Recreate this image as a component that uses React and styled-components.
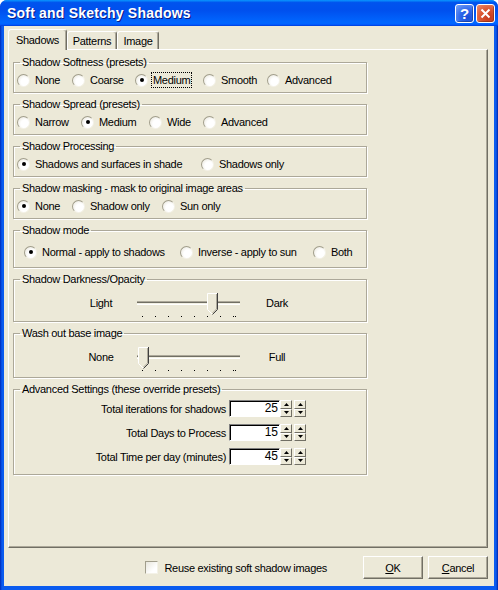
import React from 'react';
import styled, { createGlobalStyle } from 'styled-components';

const GlobalStyle = createGlobalStyle`
  html, body {
    margin: 0;
    padding: 0;
    background: #ffffff;
  }
  body {
    font-family: "Liberation Sans", Arial, sans-serif;
    font-size: 11px;
    letter-spacing: -0.3px;
    color: #000000;
  }
`;

const Window = styled.div`
  width: 498px;
  height: 590px;
  display: flex;
  flex-direction: column;
  border-radius: 7px 7px 0 0;
  overflow: hidden;
  background: linear-gradient(to right, #0029b8 0, #0a5bef 2px, #0a5bef calc(100% - 2px), #0023a8 100%);
`;

const TitleBar = styled.div`
  height: 26px;
  flex: none;
  display: flex;
  align-items: center;
  padding: 0 3px 0 7px;
  background: linear-gradient(
    to bottom,
    #0997ff 0%,
    #0053ee 10%,
    #0050ee 40%,
    #0066ff 85%,
    #0066ff 90%,
    #005bff 94%,
    #003dd7 100%
  );
`;

const Title = styled.div`
  color: #ffffff;
  font-weight: bold;
  font-size: 14px;
  letter-spacing: 0.2px;
  text-shadow: 1px 1px 0 #0a1883;
`;

const TitleButtons = styled.div`
  margin-left: auto;
  display: flex;
  gap: 2px;
`;

const CaptionButton = styled.div`
  width: 19px;
  height: 19px;
  box-sizing: border-box;
  border: 1px solid #ffffff;
  border-radius: 3px;
  display: flex;
  align-items: center;
  justify-content: center;
  color: #ffffff;
  font-weight: bold;
  font-size: 15px;
  letter-spacing: 0;
  background: ${p => p.$close
    ? 'radial-gradient(circle at 70% 75%, #c4391d 0%, #d9532f 45%, #ef8d6c 100%)'
    : 'radial-gradient(circle at 70% 75%, #1a4fd8 0%, #2e67ea 45%, #7aa5f8 100%)'};
  box-shadow: inset -1px -1px 0 rgba(0, 0, 0, 0.25);
`;

const Client = styled.div`
  flex: 1;
  margin: 0 4px 4px 4px;
  background: #ece9d8;
  padding-top: 3px;
  display: flex;
  flex-direction: column;
`;

const TabStrip = styled.div`
  height: 20px;
  display: flex;
  align-items: flex-end;
  padding-left: 4px;
`;

const Tab = styled.div`
  width: ${p => p.$w}px;
  height: ${p => (p.$active ? 21 : 18)}px;
  box-sizing: border-box;
  margin-bottom: ${p => (p.$active ? -1 : 0)}px;
  position: relative;
  z-index: ${p => (p.$active ? 1 : 0)};
  display: flex;
  align-items: center;
  justify-content: center;
  padding-top: ${p => (p.$active ? 0 : 1)}px;
  background: #ece9d8;
  border-top: 1px solid #ffffff;
  border-left: 1px solid #ffffff;
  border-right: 1px solid #716f64;
  border-radius: 3px 3px 0 0;
  box-shadow: inset -1px 0 0 #aca899;
`;

const Panel = styled.div`
  height: 499px;
  box-sizing: border-box;
  margin: 0 6px 0 4px;
  border: 1px solid;
  border-color: #ffffff #716f64 #716f64 #ffffff;
  box-shadow: inset -1px -1px 0 #aca899;
  padding: 6px 0 0 4px;
  display: flex;
  flex-direction: column;
  gap: 5px;
`;

const Group = styled.fieldset`
  width: 354px;
  box-sizing: border-box;
  min-width: 0;
  margin: 0;
  padding: ${p => p.$pad || '4px 0 5px 0'};
  border: 1px solid #aca899;
  box-shadow: inset 1px 1px 0 #ffffff, 1px 1px 0 #ffffff;
`;

const Legend = styled.legend`
  margin-left: 6px;
  padding: 0 2px;
  line-height: 13px;
  height: 13px;
`;

const RadioRow = styled.div`
  height: 14px;
  display: flex;
  align-items: center;
  padding-left: ${p => p.$indent || 3}px;
`;

const Option = styled.label`
  flex: none;
  width: ${p => (p.$w ? `${p.$w}px` : 'auto')};
  display: flex;
  align-items: center;
  gap: 5px;
  white-space: nowrap;
`;

const RadioDot = styled.span`
  flex: none;
  width: 13px;
  height: 13px;
  box-sizing: border-box;
  border-radius: 50%;
  border: 1px solid;
  border-color: #a19e8c #f4f2e8 #f4f2e8 #a19e8c;
  background: radial-gradient(circle at 62% 62%, #ffffff 40%, #e4e1d4 100%);
  display: flex;
  align-items: center;
  justify-content: center;

  &::after {
    content: '';
    width: 4px;
    height: 4px;
    border-radius: 50%;
    background: ${p => (p.$on ? '#000000' : 'transparent')};
  }
`;

const OptionText = styled.span`
  outline: ${p => (p.$focus ? '1px dotted #000000' : 'none')};
  outline-offset: 1px;
`;

const SliderRow = styled.div`
  display: grid;
  grid-template-columns: 60px 106px 60px;
  column-gap: 5px;
  align-items: start;
  padding-left: 57px;
`;

const SliderLabel = styled.div`
  text-align: center;
  line-height: 20px;
  height: 20px;
`;

const FieldRows = styled.div`
  display: flex;
  flex-direction: column;
  gap: 7px;
`;

const FieldRow = styled.div`
  display: flex;
  align-items: center;
  height: 17px;
`;

const FieldLabel = styled.div`
  width: 212px;
  margin-right: 3px;
  text-align: right;
  white-space: nowrap;
`;

const NumberBox = styled.div`
  width: 51px;
  height: 17px;
  box-sizing: border-box;
  background: #ffffff;
  border: 1px solid;
  border-color: #808080 #ffffff #ffffff #808080;
  box-shadow: inset 1px 1px 0 #000000;
  font-size: 12px;
  letter-spacing: 0;
  line-height: 15px;
  text-align: right;
  padding-right: 1px;
`;

const Spin = styled.div`
  width: 12px;
  height: 17px;
  margin-left: ${p => p.$gap || 0}px;
  display: grid;
  grid-template-rows: 1fr 1fr;
`;

const SpinHalf = styled.div`
  box-sizing: border-box;
  border: 1px solid;
  border-color: #ffffff #716f64 #716f64 #ffffff;
  background: #ece9d8;
  display: flex;
  align-items: center;
  justify-content: center;
`;

const BottomRow = styled.div`
  height: 38px;
  box-sizing: border-box;
  padding: 8px 6px 0 0;
  display: flex;
  justify-content: flex-end;
  align-items: flex-start;
`;

const CheckOption = styled.label`
  height: 23px;
  display: flex;
  align-items: center;
  gap: 6px;
  margin-right: 36px;
`;

const CheckBox = styled.span`
  width: 13px;
  height: 13px;
  box-sizing: border-box;
  border: 1px solid;
  border-color: #a19e8c #f4f2e8 #f4f2e8 #a19e8c;
  background: linear-gradient(135deg, #e8e6dc 0%, #ffffff 70%);
`;

const Buttons = styled.div`
  display: flex;
  gap: 5px;
`;

const Button = styled.div`
  width: 60px;
  height: 23px;
  box-sizing: border-box;
  display: flex;
  align-items: center;
  justify-content: center;
  border: 1px solid;
  border-color: #ffffff #716f64 #716f64 #ffffff;
  box-shadow: inset -1px -1px 0 #aca899;
  background: #ece9d8;

  u {
    text-decoration: underline;
  }
`;

function Arrow({ up }) {
  return (
    <svg width="5" height="3" viewBox="0 0 5 3">
      <polygon points={up ? '2.5,0 5,3 0,3' : '0,0 5,0 2.5,3'} fill="#000" />
    </svg>
  );
}

function Slider({ thumb }) {
  const ticks = [0, 1, 2, 3, 4, 5, 6, 7].map(i => 6 + 13 * i);
  const x = thumb;
  return (
    <svg width="106" height="26" viewBox="0 0 106 26">
      <line x1="1" y1="8.5" x2="104" y2="8.5" stroke="#aca899" />
      <line x1="1" y1="9.5" x2="104" y2="9.5" stroke="#716f64" />
      <line x1="1" y1="10.5" x2="104" y2="10.5" stroke="#f1efe2" />
      <line x1="1" y1="11.5" x2="104" y2="11.5" stroke="#ffffff" />
      {ticks.map(t => (
        <rect key={t} x={t} y="23" width="1" height="1" fill="#000" />
      ))}
      <rect x="99" y="23" width="1" height="1" fill="#000" />
      <polygon
        points={`${x},0 ${x + 11},0 ${x + 11},16 ${x + 5.5},21.5 ${x},16`}
        fill="#ece9d8"
      />
      <polyline
        points={`${x + 5},21 ${x + 0.5},16.5 ${x + 0.5},0.5 ${x + 10},0.5`}
        fill="none"
        stroke="#ffffff"
      />
      <polyline
        points={`${x + 10.5},0 ${x + 10.5},16.5 ${x + 5.5},21.5`}
        fill="none"
        stroke="#404040"
      />
      <polyline
        points={`${x + 9.5},1 ${x + 9.5},16 ${x + 5.5},20`}
        fill="none"
        stroke="#aca899"
      />
    </svg>
  );
}

function Radio({ label, on, w, focus }) {
  return (
    <Option $w={w}>
      <RadioDot $on={on} />
      <OptionText $focus={focus}>{label}</OptionText>
    </Option>
  );
}

function NumberField({ label, value }) {
  return (
    <FieldRow>
      <FieldLabel>{label}</FieldLabel>
      <NumberBox>{value}</NumberBox>
      <Spin>
        <SpinHalf><Arrow up /></SpinHalf>
        <SpinHalf><Arrow /></SpinHalf>
      </Spin>
      <Spin $gap={2}>
        <SpinHalf><Arrow up /></SpinHalf>
        <SpinHalf><Arrow /></SpinHalf>
      </Spin>
    </FieldRow>
  );
}

export default function App() {
  return (
    <>
      <GlobalStyle />
      <Window>
        <TitleBar>
          <Title>Soft and Sketchy Shadows</Title>
          <TitleButtons>
            <CaptionButton>?</CaptionButton>
            <CaptionButton $close>
              <svg width="11" height="11" viewBox="0 0 11 11">
                <path d="M1.5 1.5 L9.5 9.5 M9.5 1.5 L1.5 9.5" stroke="#fff" strokeWidth="2" />
              </svg>
            </CaptionButton>
          </TitleButtons>
        </TitleBar>
        <Client>
          <TabStrip>
            <Tab $active $w={59}>Shadows</Tab>
            <Tab $w={50}>Patterns</Tab>
            <Tab $w={42}>Image</Tab>
          </TabStrip>
          <Panel>
            <Group>
              <Legend>Shadow Softness (presets)</Legend>
              <RadioRow>
                <Radio label="None" w={55} />
                <Radio label="Coarse" w={63} />
                <Radio label="Medium" w={68} on focus />
                <Radio label="Smooth" w={64} />
                <Radio label="Advanced" />
              </RadioRow>
            </Group>
            <Group>
              <Legend>Shadow Spread (presets)</Legend>
              <RadioRow>
                <Radio label="Narrow" w={64} />
                <Radio label="Medium" w={68} on />
                <Radio label="Wide" w={54} />
                <Radio label="Advanced" />
              </RadioRow>
            </Group>
            <Group>
              <Legend>Shadow Processing</Legend>
              <RadioRow>
                <Radio label="Shadows and surfaces in shade" w={184} on />
                <Radio label="Shadows only" />
              </RadioRow>
            </Group>
            <Group>
              <Legend>Shadow masking - mask to original image areas</Legend>
              <RadioRow>
                <Radio label="None" w={55} on />
                <Radio label="Shadow only" w={90} />
                <Radio label="Sun only" />
              </RadioRow>
            </Group>
            <Group $pad="8px 0 8px 0">
              <Legend>Shadow mode</Legend>
              <RadioRow $indent={10}>
                <Radio label="Normal - apply to shadows" w={156} on />
                <Radio label="Inverse - apply to sun" w={133} />
                <Radio label="Both" />
              </RadioRow>
            </Group>
            <Group $pad="7px 0 2px 0">
              <Legend>Shadow Darkness/Opacity</Legend>
              <SliderRow>
                <SliderLabel>Light</SliderLabel>
                <Slider thumb={71} />
                <SliderLabel>Dark</SliderLabel>
              </SliderRow>
            </Group>
            <Group $pad="7px 0 4px 0">
              <Legend>Wash out base image</Legend>
              <SliderRow>
                <SliderLabel>None</SliderLabel>
                <Slider thumb={2} />
                <SliderLabel>Full</SliderLabel>
              </SliderRow>
            </Group>
            <Group $pad="4px 0 9px 0">
              <Legend>Advanced Settings (these override presets)</Legend>
              <FieldRows>
                <NumberField label="Total iterations for shadows" value="25" />
                <NumberField label="Total Days to Process" value="15" />
                <NumberField label="Total Time per day (minutes)" value="45" />
              </FieldRows>
            </Group>
          </Panel>
          <BottomRow>
            <CheckOption>
              <CheckBox />
              <span>Reuse existing soft shadow images</span>
            </CheckOption>
            <Buttons>
              <Button><u>O</u>K</Button>
              <Button><u>C</u>ancel</Button>
            </Buttons>
          </BottomRow>
        </Client>
      </Window>
    </>
  );
}
